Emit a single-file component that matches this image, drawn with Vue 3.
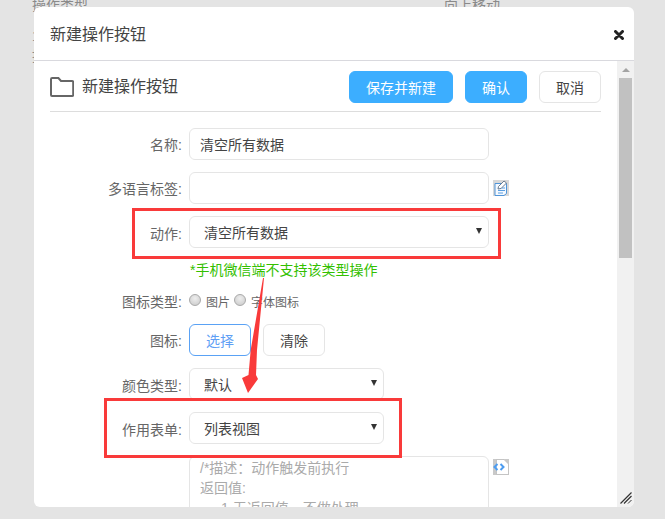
<script setup>
const rows = { top: '操作类型', right: '向上移动' }
</script>

<template>
  <div class="page">
    <div class="behind">
      <span>{{ rows.top }}</span>
      <span class="behind-r">{{ rows.right }}</span>
      <span class="behind-a">1</span>
      <span class="behind-b">提</span>
    </div>
    <div class="dialog">
      <header class="head">
        <span class="head-title">新建操作按钮</span>
        <svg class="close" viewBox="0 0 10 10" width="10" height="10"><path d="M1.5 1.5 8.5 8.5M8.5 1.5 1.5 8.5" stroke="#222" stroke-width="3" stroke-linecap="round" fill="none"/></svg>
      </header>
      <div class="body">
        <div class="content">
          <div class="toolbar">
            <svg class="folder" width="24" height="20" viewBox="0 0 24 20"><path d="M1 18V2.2C1 1.5 1.5 1 2.2 1h6.2l2.6 3h11c.7 0 1.2.5 1.2 1.2V18c0 .6-.5 1-1 1H2c-.6 0-1-.4-1-1Z" fill="none" stroke="#666" stroke-width="2"/></svg>
            <span class="tool-title">新建操作按钮</span>
            <button class="btn primary wide">保存并新建</button>
            <button class="btn primary">确认</button>
            <button class="btn">取消</button>
          </div>
          <div class="form">
            <div class="row">
              <label>名称:</label>
              <input class="field" value="清空所有数据" />
            </div>
            <div class="row">
              <label>多语言标签:</label>
              <input class="field" />
              <svg class="side-icon" width="16" height="16" viewBox="0 0 16 16">
                <rect width="16" height="16" fill="#d8d8d8"/>
                <path d="M2 3.5h11.5v10L11 15.5H2z" fill="#f4f9ff" stroke="#4f94d8"/>
                <path d="M5 8h7M5 10.5h7M5 13h5" stroke="#5a9ee0"/>
                <path d="M5.5 6.5 11 1l2.5 2L8 8.5l-3 .5z" fill="#fff" stroke="#5c6f85" stroke-width=".9"/>
              </svg>
            </div>
            <div class="row low">
              <label>动作:</label>
              <div class="select-wrap"><select class="field sel"><option>清空所有数据</option></select><i class="caret"></i></div>
            </div>
            <p class="hint">*手机微信端不支持该类型操作</p>
            <div class="row radio-row">
              <label>图标类型:</label>
              <i class="radio"></i><span class="radio-text">图片</span>
              <i class="radio second"></i><span class="radio-text">字体图标</span>
            </div>
            <div class="row">
              <label>图标:</label>
              <button class="btn choose">选择</button>
              <button class="btn clear">清除</button>
            </div>
            <div class="row low">
              <label>颜色类型:</label>
              <div class="select-wrap short"><select class="field sel"><option>默认</option></select><i class="caret"></i></div>
            </div>
            <div class="row low">
              <label>作用表单:</label>
              <div class="select-wrap short"><select class="field sel"><option>列表视图</option></select><i class="caret"></i></div>
            </div>
            <div class="row top">
              <label></label>
              <div class="code">/*描述&#xFF1A;动作触发前执行<br />返回值:<br /><span class="indent">1.无返回值&#xFF0C;不做处理</span></div>
              <svg class="side-icon code-icon" width="16" height="16" viewBox="0 0 16 16">
                <rect width="16" height="16" fill="#c9c9c9"/>
                <path d="M3.5 .5h7.5l4.5 4.5v10.5h-12z" fill="#fff" stroke="#bbb" stroke-width=".8"/>
                <path d="M4.5 5 1.5 8l3 3M7.5 5l3 3-3 3" fill="none" stroke="#4c9cf0" stroke-width="2"/>
              </svg>
            </div>
          </div>
        </div>
        <div class="scrollbar">
          <i class="up"></i>
          <div class="thumb"></div>
        </div>
      </div>
      <svg class="grip" width="12" height="12" viewBox="0 0 12 12"><path d="M0.5 11.5 11.5.5M4 11.5l7.5-7.5" stroke="#333" stroke-width="1.2" fill="none"/><path d="M8 11.5l3.5-3.5" stroke="#333" fill="none"/></svg>
    </div>
    <div class="mark mark-a"></div>
    <div class="mark mark-b"></div>
    <svg class="arrow" width="30" height="125" viewBox="0 0 30 125"><path d="M24 3 25 3 18 75 17 100 19 104 9 118 3 103 9.5 100 11.7 75Z" fill="#f93a3a"/></svg>
  </div>
</template>

<style>
html, body { margin: 0; background: #e4e4e4; }
</style>

<style scoped>
.page {
  position: relative;
  width: 665px;
  height: 519px;
  overflow: hidden;
  background: #e4e4e4;
  font-family: "Liberation Sans", "Noto Sans CJK SC", sans-serif;
  font-size: 14px;
  color: #333;
}
.behind {
  position: absolute;
  top: -5px;
  left: 32px;
  color: #8a8a8a;
  line-height: 20px;
}
.behind-r { position: absolute; left: 412px; width: 70px; }
.behind-a { position: absolute; left: 0; top: 31px; }
.behind-b { position: absolute; left: 0; top: 51px; }
.dialog {
  position: absolute;
  left: 34px;
  top: 7px;
  width: 600px;
  height: 500px;
  background: #fff;
  border-radius: 6px;
  display: flex;
  flex-direction: column;
  overflow: hidden;
}
.head {
  flex: 0 0 54px;
  box-sizing: border-box;
  border-bottom: 1px solid #d9d9de;
  padding: 2px 16px 0;
  display: flex;
  align-items: center;
  justify-content: space-between;
}
.head-title, .tool-title { font-size: 16px; color: #444; line-height: 24px; }
.close { margin-right: -6px; }
.body { flex: 1; display: flex; min-height: 0; }
.content { flex: 1; padding: 0 16px; min-width: 0; overflow: hidden; }
.toolbar {
  height: 48px;
  padding-top: 2px;
  border-bottom: 1px solid #ddd;
  display: flex;
  align-items: center;
}
.folder { margin-right: 8px; }
.tool-title { margin-right: auto; }
.btn {
  width: 62px;
  height: 32px;
  margin-left: 12px;
  padding: 0;
  border: 1px solid #e5e5e5;
  border-radius: 6px;
  background: #fff;
  color: #444;
  font: inherit;
}
.primary { background: #3caeff; border-color: #3caeff; color: #fff; }
.wide { width: 104px; }
.form { padding-top: 16px; }
.row {
  display: flex;
  align-items: center;
  min-height: 32px;
  margin-bottom: 12px;
  position: relative;
}
.row.top { align-items: flex-start; }
label {
  flex: 0 0 132px;
  margin-right: 7px;
  text-align: right;
  color: #666;
}
.low label { padding-top: 2px; }
.field {
  box-sizing: border-box;
  width: 300px;
  height: 32px;
  border: 1px solid #e5e5e5;
  border-radius: 6px;
  padding: 0 10px;
  background: #fff;
  color: #444;
  font: inherit;
  outline: none;
}
.select-wrap { position: relative; width: 300px; }
.select-wrap.short { width: 195px; }
.sel { width: 100%; appearance: none; padding: 2px 0 0 14px; display: block; }
.caret {
  position: absolute;
  right: 7px;
  top: 12px;
  border: 3.5px solid transparent;
  border-top: 6px solid #333;
  border-bottom: 0;
}
.side-icon { margin-left: 4px; }
.hint {
  margin: 13px 0 11px 140px;
  height: 19px;
  line-height: 19px;
  color: #33c000;
}
.radio-row { min-height: 20px; margin-bottom: 13px; }
.radio {
  width: 12px;
  height: 12px;
  box-sizing: border-box;
  margin-right: 5px;
  border: 1px solid #a9a9a9;
  border-radius: 50%;
  background: radial-gradient(circle at 50% 35%, #eee, #c8c8c8);
  transform: translateY(-1px);
}
.second { margin-left: 4px; }
.radio-text { font-size: 12px; color: #666; }
.choose { margin-left: 0; border-color: #5aa2f5; color: #5f9ff5; }
.code {
  box-sizing: border-box;
  width: 300px;
  height: 100px;
  border: 1px solid #e5e5e5;
  border-radius: 6px 6px 0 0;
  padding: 1px 10px;
  line-height: 20px;
  color: #aaa;
}
.indent { padding-left: 21px; }
.code-icon { margin-top: 3px; }
.scrollbar {
  flex: 0 0 17px;
  background: #f1f1f1;
  display: flex;
  flex-direction: column;
  align-items: center;
}
.up {
  margin-top: 7px;
  border: 4px solid transparent;
  border-bottom: 4px solid #a3a3a3;
  border-top: 0;
}
.thumb { width: 13px; margin-top: 6px; height: 180px; background: #c1c1c1; }
.grip { position: absolute; right: 2px; bottom: 3px; }
.mark {
  position: absolute;
  box-sizing: border-box;
  border: 3px solid #f93a3a;
}
.mark-a { left: 132px; top: 208px; width: 369px; height: 51px; }
.mark-b { left: 104px; top: 398px; width: 298px; height: 60px; }
.arrow { position: absolute; left: 239px; top: 275px; }
</style>
